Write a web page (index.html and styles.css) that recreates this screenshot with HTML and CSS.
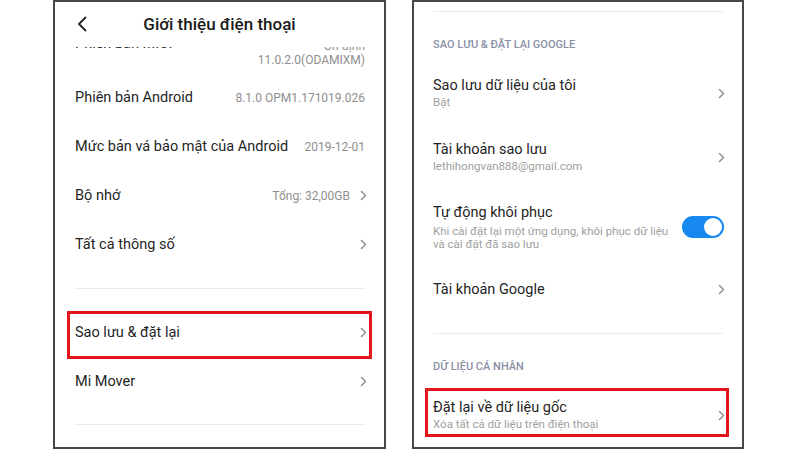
FILE: index.html
```html
<!DOCTYPE html>
<html lang="vi">

<head>
    <meta charset="UTF-8">
    <meta name="viewport" content="width=device-width, initial-scale=1.0">
    <title>Sao lưu & đặt lại</title>
    <link rel="stylesheet" href="styles.css">
</head>

<body>
    <div class="screens">

        <!-- Left screen: Giới thiệu điện thoại -->
        <div class="phone phone-left">
            <header class="topbar">
                <span class="back">
                    <svg width="10" height="16" viewBox="0 0 10 16"><path d="M8.5 1.5 L2 8 L8.5 14.5" fill="none" stroke="#222" stroke-width="1.8" stroke-linecap="round" stroke-linejoin="round"/></svg>
                </span>
                <h1>Giới thiệu điện thoại</h1>
                <span></span>
            </header>

            <div class="list">
                <div class="item item-cut">
                    <span class="label">Phiên bản MIUI</span>
                    <span class="value value-stack">Ổn định<br>11.0.2.0(ODAMIXM)</span>
                </div>
                <div class="item">
                    <span class="label">Phiên bản Android</span>
                    <span class="value">8.1.0 OPM1.171019.026</span>
                </div>
                <div class="item">
                    <span class="label">Mức bản vá bảo mật của Android</span>
                    <span class="value">2019-12-01</span>
                </div>
                <div class="item">
                    <span class="label">Bộ nhớ</span>
                    <span class="value">Tổng: 32,00GB</span>
                    <span class="chev"><svg width="7" height="11" viewBox="0 0 7 11"><path d="M1.5 1.5 L5.5 5.5 L1.5 9.5" fill="none" stroke="#8f8f8f" stroke-width="1.5" stroke-linecap="round" stroke-linejoin="round"/></svg></span>
                </div>
                <div class="item">
                    <span class="label">Tất cả thông số</span>
                    <span class="chev"><svg width="7" height="11" viewBox="0 0 7 11"><path d="M1.5 1.5 L5.5 5.5 L1.5 9.5" fill="none" stroke="#8f8f8f" stroke-width="1.5" stroke-linecap="round" stroke-linejoin="round"/></svg></span>
                </div>

                <div class="divider divider-left"></div>

                <div class="item marked">
                    <span class="label">Sao lưu &amp; đặt lại</span>
                    <span class="chev"><svg width="7" height="11" viewBox="0 0 7 11"><path d="M1.5 1.5 L5.5 5.5 L1.5 9.5" fill="none" stroke="#8f8f8f" stroke-width="1.5" stroke-linecap="round" stroke-linejoin="round"/></svg></span>
                    <span class="highlight highlight-left"></span>
                </div>
                <div class="item">
                    <span class="label">Mi Mover</span>
                    <span class="chev"><svg width="7" height="11" viewBox="0 0 7 11"><path d="M1.5 1.5 L5.5 5.5 L1.5 9.5" fill="none" stroke="#8f8f8f" stroke-width="1.5" stroke-linecap="round" stroke-linejoin="round"/></svg></span>
                </div>

                <div class="divider divider-end"></div>
            </div>
        </div>

        <!-- Right screen: Sao lưu & đặt lại -->
        <div class="phone phone-right">
            <div class="divider divider-top"></div>

            <div class="section-head">SAO LƯU &amp; ĐẶT LẠI GOOGLE</div>

            <div class="row">
                <div class="row-text">
                    <div class="row-title">Sao lưu dữ liệu của tôi</div>
                    <div class="row-sub">Bật</div>
                </div>
                <span class="chev"><svg width="7" height="11" viewBox="0 0 7 11"><path d="M1.5 1.5 L5.5 5.5 L1.5 9.5" fill="none" stroke="#8f8f8f" stroke-width="1.5" stroke-linecap="round" stroke-linejoin="round"/></svg></span>
            </div>
            <div class="row">
                <div class="row-text">
                    <div class="row-title">Tài khoản sao lưu</div>
                    <div class="row-sub">lethihongvan888@gmail.com</div>
                </div>
                <span class="chev"><svg width="7" height="11" viewBox="0 0 7 11"><path d="M1.5 1.5 L5.5 5.5 L1.5 9.5" fill="none" stroke="#8f8f8f" stroke-width="1.5" stroke-linecap="round" stroke-linejoin="round"/></svg></span>
            </div>
            <div class="row row-tall">
                <div class="row-text">
                    <div class="row-title">Tự động khôi phục</div>
                    <div class="row-desc">Khi cài đặt lại một ứng dụng, khôi phục dữ liệu<br>và cài đặt đã sao lưu</div>
                </div>
                <span class="toggle"><span class="knob"></span></span>
            </div>
            <div class="row row-single">
                <div class="row-text">
                    <div class="row-title">Tài khoản Google</div>
                </div>
                <span class="chev"><svg width="7" height="11" viewBox="0 0 7 11"><path d="M1.5 1.5 L5.5 5.5 L1.5 9.5" fill="none" stroke="#8f8f8f" stroke-width="1.5" stroke-linecap="round" stroke-linejoin="round"/></svg></span>
            </div>

            <div class="divider divider-mid"></div>

            <div class="section-head">DỮ LIỆU CÁ NHÂN</div>

            <div class="row marked">
                <div class="row-text">
                    <div class="row-title">Đặt lại về dữ liệu gốc</div>
                    <div class="row-sub">Xóa tất cả dữ liệu trên điện thoại</div>
                </div>
                <span class="chev"><svg width="7" height="11" viewBox="0 0 7 11"><path d="M1.5 1.5 L5.5 5.5 L1.5 9.5" fill="none" stroke="#8f8f8f" stroke-width="1.5" stroke-linecap="round" stroke-linejoin="round"/></svg></span>
                <span class="highlight highlight-right"></span>
            </div>
        </div>

    </div>
</body>

</html>
```

FILE: styles.css
```css
body {
    margin: 0;
    padding: 0;
    background-color: #fff;
    font-family: Roboto, 'Noto Sans', Arial, sans-serif;
    color: #1f1f1f;
}

.screens {
    display: flex;
    gap: 26px;
    height: 450px;
    padding-left: 53px;
}

.phone {
    box-sizing: border-box;
    height: 449px;
    border: 2px solid #474747;
    background-color: #fff;
    display: flex;
    flex-direction: column;
    overflow: hidden;
}

.phone-left {
    width: 333px;
}

.phone-right {
    width: 332px;
    padding: 0 19px;
}

/* left screen */
.topbar {
    height: 45px;
    flex-shrink: 0;
    display: grid;
    grid-template-columns: 1fr auto 1fr;
    align-items: center;
    background-color: #fff;
    padding-bottom: 2px;
    box-sizing: border-box;
}

.back {
    padding-left: 22px;
    display: flex;
    align-items: center;
}

.topbar h1 {
    margin: 0;
    font-size: 17px;
    font-weight: 500;
    color: #1a1a1a;
}

.list {
    flex: 1;
    overflow: hidden;
    padding: 0 19px 0 20px;
}

.item {
    height: 49px;
    display: flex;
    align-items: center;
    position: relative;
}

.item-cut {
    margin-top: -23px;
}

.item-cut .label {
    align-self: flex-start;
    margin-top: 11px;
}

.label {
    flex: 1;
    font-size: 14.5px;
    color: #1f1f1f;
}

.value {
    font-size: 12px;
    color: #8e8e8e;
}

.value-stack {
    align-self: flex-end;
    margin-bottom: 6px;
    text-align: right;
    line-height: 14px;
}

.chev {
    display: flex;
    align-items: center;
    margin-left: 10px;
    margin-right: -2px;
}

.divider {
    height: 1px;
    background-color: #ececec;
}

.divider-left {
    margin: 19px 0 19px 0;
}

.divider-end {
    margin-top: 18px;
}

.highlight {
    position: absolute;
    border: 3px solid #e3141c;
    pointer-events: none;
}

.highlight-left {
    top: 3px;
    bottom: -2px;
    left: -8px;
    right: -7px;
}

/* right screen */
.divider-top {
    margin-top: 9px;
    flex-shrink: 0;
}

.divider-mid {
    margin-top: 19px;
    flex-shrink: 0;
}

.section-head {
    flex-shrink: 0;
    padding: 26px 0 9px;
    font-size: 11px;
    line-height: 14px;
    font-weight: 500;
    color: #8b90a6;
}

.row {
    flex-shrink: 0;
    height: 64px;
    display: flex;
    align-items: center;
    position: relative;
}

.row-tall {
    height: 75px;
}

.row-single {
    height: 50px;
}

.row-text {
    flex: 1;
}

.row-title {
    font-size: 14.5px;
    line-height: 19px;
    color: #1f1f1f;
}

.row-sub {
    font-size: 11.5px;
    line-height: 15px;
    color: #a0a0a0;
}

.row-desc {
    margin-top: 3px;
    font-size: 11.5px;
    line-height: 13px;
    color: #a0a0a0;
}

.toggle {
    width: 42px;
    height: 22px;
    border-radius: 11px;
    background-color: #1688f0;
    display: flex;
    align-items: center;
    justify-content: flex-end;
    padding: 0 2px;
    box-sizing: border-box;
    margin-right: -1px;
}

.knob {
    width: 18px;
    height: 18px;
    border-radius: 50%;
    background-color: #fff;
}

.highlight-right {
    top: 5px;
    bottom: 10px;
    left: -8px;
    right: -6px;
}
```
